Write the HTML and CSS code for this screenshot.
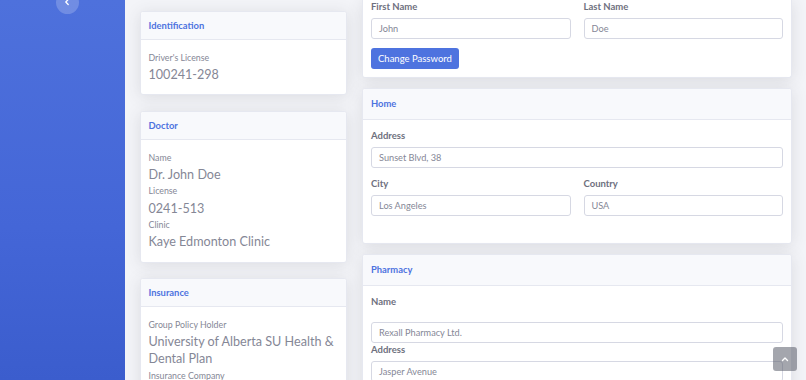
FILE: index.html
```html
<!DOCTYPE html>
<html lang="en">
<head>
<meta charset="utf-8">
<title>Profile</title>
<link rel="stylesheet" href="styles.css">
</head>
<body>
<div class="wrapper">
  <aside class="sidebar">
    <button class="sidebar-toggle" type="button" aria-label="Toggle sidebar">
      <svg width="8" height="8" viewBox="0 0 8 8"><path d="M5.2 1.5 L2.8 4 L5.2 6.5" fill="none" stroke="#fff" stroke-width="1.3" stroke-linecap="round" stroke-linejoin="round"/></svg>
    </button>
  </aside>
  <main class="content">
    <div class="col col-left">
      <section class="card">
        <header class="card-header card-header-sm"><h6 class="card-title">Identification</h6></header>
        <div class="card-body info">
          <div class="info-label">Driver's License</div>
          <div class="info-value">100241-298</div>
        </div>
      </section>
      <section class="card">
        <header class="card-header card-header-sm"><h6 class="card-title">Doctor</h6></header>
        <div class="card-body info">
          <div class="info-label">Name</div>
          <div class="info-value">Dr. John Doe</div>
          <div class="info-label">License</div>
          <div class="info-value">0241-513</div>
          <div class="info-label">Clinic</div>
          <div class="info-value">Kaye Edmonton Clinic</div>
        </div>
      </section>
      <section class="card">
        <header class="card-header card-header-sm"><h6 class="card-title">Insurance</h6></header>
        <div class="card-body info">
          <div class="info-label">Group Policy Holder</div>
          <div class="info-value">University of Alberta SU Health &amp; Dental Plan</div>
          <div class="info-label">Insurance Company</div>
          <div class="info-value">Alberta Blue Cross</div>
        </div>
      </section>
    </div>
    <div class="col col-right">
      <section class="card card-cut">
        <div class="card-body form form-account">
          <div class="row">
            <div class="form-group">
              <label class="form-label">First Name</label>
              <div class="input">John</div>
            </div>
            <div class="form-group">
              <label class="form-label">Last Name</label>
              <div class="input">Doe</div>
            </div>
          </div>
          <button class="btn" type="button">Change Password</button>
        </div>
      </section>
      <section class="card">
        <header class="card-header card-header-lg"><h6 class="card-title">Home</h6></header>
        <div class="card-body form form-home">
          <div class="form-group">
            <label class="form-label">Address</label>
            <div class="input">Sunset Blvd, 38</div>
          </div>
          <div class="row">
            <div class="form-group">
              <label class="form-label">City</label>
              <div class="input">Los Angeles</div>
            </div>
            <div class="form-group">
              <label class="form-label">Country</label>
              <div class="input">USA</div>
            </div>
          </div>
        </div>
      </section>
      <section class="card">
        <header class="card-header card-header-lg"><h6 class="card-title">Pharmacy</h6></header>
        <div class="card-body form form-pharmacy">
          <div class="form-group form-group-tight">
            <label class="form-label form-label-spaced">Name</label>
            <div class="input">Rexall Pharmacy Ltd.</div>
          </div>
          <div class="form-group">
            <label class="form-label">Address</label>
            <div class="input">Jasper Avenue</div>
          </div>
        </div>
      </section>
    </div>
  </main>
</div>
<a class="scroll-top" href="#" aria-label="Scroll to top">
  <svg width="8" height="6" viewBox="0 0 8 6"><path d="M1.5 4.5 L4 2 L6.5 4.5" fill="none" stroke="#fff" stroke-width="1.4" stroke-linecap="round" stroke-linejoin="round"/></svg>
</a>
</body>
</html>
```

FILE: styles.css
```css
* { box-sizing: border-box; }

html, body {
  margin: 0;
  height: 100%;
  overflow: hidden;
}

body {
  font-family: Lato, "Noto Sans", sans-serif;
  background: #f3f4f8;
  color: #858796;
}

.wrapper {
  display: flex;
  height: 380px;
}

.sidebar {
  width: 125px;
  flex: none;
  background: linear-gradient(180deg, #4e71dc 0%, #4466d7 60%, #3b5dcd 100%);
  display: flex;
  flex-direction: column;
  align-items: center;
}

.sidebar-toggle {
  width: 23px;
  height: 23px;
  margin-top: -9px;
  margin-left: 9px;
  border: 0;
  padding: 0 0 8px;
  border-radius: 50%;
  background: rgba(255, 255, 255, 0.2);
  display: flex;
  align-items: flex-end;
  justify-content: center;
}

.content {
  flex: 1;
  display: grid;
  grid-template-columns: 207px 1fr;
  column-gap: 15px;
  padding: 0 14px 0 15px;
  align-items: start;
}

.col {
  display: flex;
  flex-direction: column;
}

.col-left {
  padding-top: 10.5px;
  gap: 15.5px;
}

.col-right {
  gap: 10px;
}

.card {
  background: #fff;
  border: 1px solid #e6e8f0;
  border-radius: 3px;
  box-shadow: 0 2px 16px rgba(58, 59, 69, 0.13);
  overflow: hidden;
}

.card-cut {
  border-top: 0;
  border-radius: 0 0 3px 3px;
}

.card-header {
  background: #f8f9fc;
  border-bottom: 1px solid #e6e8f0;
  display: flex;
  align-items: center;
}

.card-header-sm {
  height: 28px;
  padding: 0 7.5px;
}

.card-header-lg {
  height: 31.5px;
  padding: 0 8px;
}

.card-title {
  margin: 0;
  font-size: 9.4px;
  font-weight: 700;
  color: #4e73df;
}

.card-body.info {
  padding: 11px 7px 10px 7.5px;
}

.info-label {
  font-size: 8.8px;
  line-height: 13px;
  margin-bottom: 2.2px;
  color: #858796;
}

.info-value {
  font-size: 12.6px;
  line-height: 17px;
  margin-bottom: 1.5px;
  color: #858796;
}

.card-body.form {
  padding: 0 8px 8px;
}

.card-body.form-home {
  padding-top: 9px;
  padding-bottom: 18.5px;
}

.card-body.form-pharmacy {
  padding-top: 9px;
}

.row {
  display: grid;
  grid-template-columns: 1fr 1fr;
  column-gap: 13px;
}

.form-group {
  display: flex;
  flex-direction: column;
  margin-bottom: 8.5px;
}

.form-group-tight {
  margin-bottom: 0;
}

.form-label {
  font-size: 9.5px;
  font-weight: 700;
  line-height: 13px;
  margin-bottom: 5px;
  color: #6e707e;
}

.form-label-spaced {
  margin-bottom: 14px;
}

.input {
  height: 21px;
  border: 1px solid #d6d8e3;
  border-radius: 3px;
  padding: 0 7px;
  font-size: 9.2px;
  line-height: 19px;
  color: #858796;
  background: #fff;
}

.btn {
  display: block;
  height: 21px;
  padding: 0 7px;
  border: 0;
  border-radius: 3px;
  background: #4e73df;
  color: #fff;
  font-family: inherit;
  font-size: 9.5px;
  line-height: 21px;
}

.scroll-top {
  position: fixed;
  left: 773px;
  top: 347px;
  width: 24px;
  height: 24px;
  border-radius: 3px;
  background: rgba(90, 92, 105, 0.55);
  display: flex;
  align-items: center;
  justify-content: center;
}
```
